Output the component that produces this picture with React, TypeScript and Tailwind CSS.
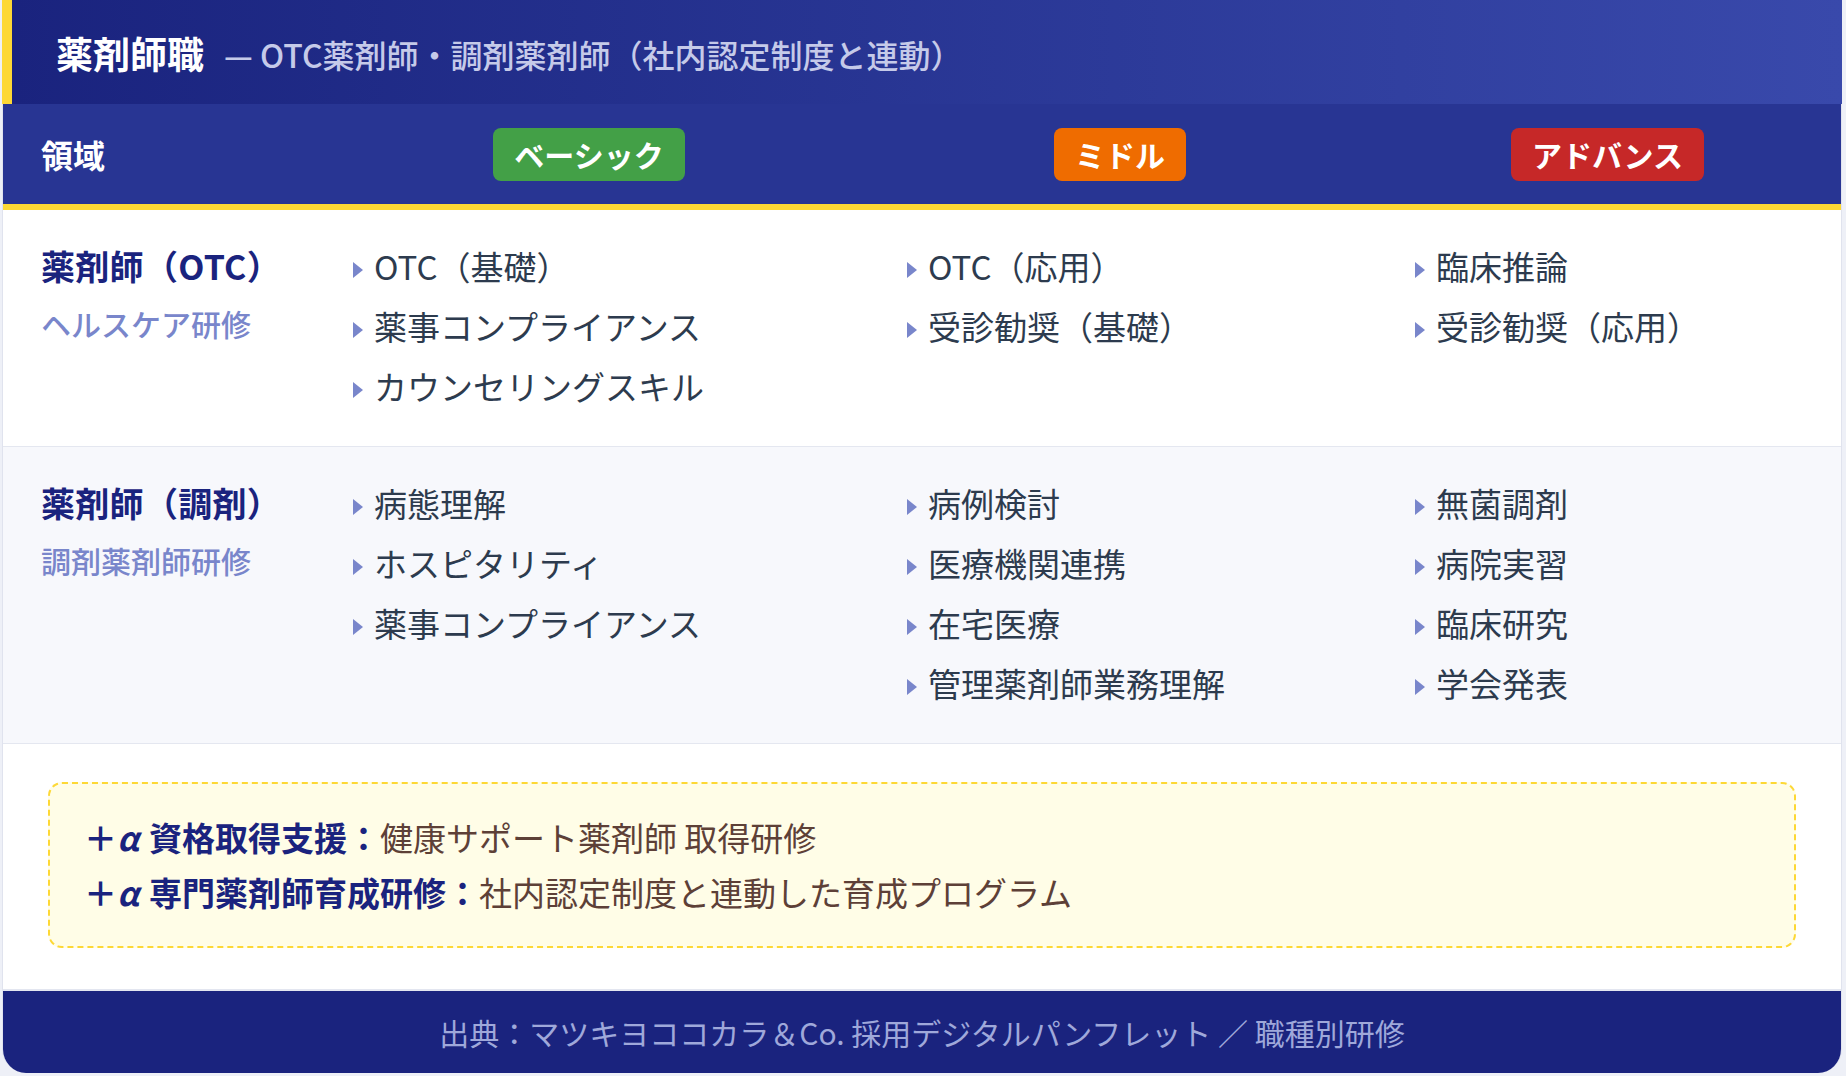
import React from "react";

const COLS = "grid grid-cols-[309px_554px_508px_467px]";

function Bullet() {
  return (
    <svg width="10" height="16" viewBox="0 0 10 16" className="shrink-0 mt-[8px]">
      <path d="M0 0 L10 8 L0 16 Z" fill="#7986cb" />
    </svg>
  );
}

function Item({ text }: { text: string }) {
  return (
    <div className="flex items-center gap-[11px] h-[60px] text-[33px] text-[#2d3b4e] leading-[60px] whitespace-nowrap">
      <Bullet />
      <span>{text}</span>
    </div>
  );
}

function Cell({ items }: { items: string[] }) {
  return (
    <div className="pl-[41px] flex flex-col">
      {items.map((t, i) => (
        <Item key={i} text={t} />
      ))}
    </div>
  );
}

function Row({
  label,
  sub,
  cols,
  bg,
}: {
  label: string;
  sub: string;
  cols: string[][];
  bg: string;
}) {
  return (
    <div className={`${COLS} pt-[26px] pb-[30px] border-b border-[#e4e7f0] ${bg}`}>
      <div className="pl-[38px] flex flex-col">
        <div className="text-[34px] font-bold text-[#1a237e] leading-[60px] whitespace-nowrap tracking-[0.3px]">{label}</div>
        <div className="text-[30px] font-medium text-[#7986cb] leading-[54px] whitespace-nowrap">{sub}</div>
      </div>
      {cols.map((c, i) => (
        <Cell key={i} items={c} />
      ))}
    </div>
  );
}

function PlusLine({ head, body }: { head: string; body: string }) {
  return (
    <div>
      <span className="font-bold text-[#1a237e]">
        ＋<span className="italic mr-[10px]">α</span>
        {head}
      </span>
      <span className="text-[#5d4037]">{body}</span>
    </div>
  );
}

export default function App() {
  return (
    <div className="min-h-screen bg-[#eef0f7] font-['Noto_Sans_CJK_JP','Noto_Sans',sans-serif]">
      <div className="w-[1840px] ml-[2px]">
        {/* Header */}
        <div className="h-[104px] border-l-[10px] border-[#fdd835] bg-gradient-to-r from-[#1a237e] to-[#3949ab] flex items-center pl-[44px] pt-[4px] gap-[20px]">
          <span className="text-[37px] font-bold text-white whitespace-nowrap">薬剤師職</span>
          <span className="text-[32px] font-medium text-[#c5cae9] whitespace-nowrap">— OTC薬剤師・調剤薬剤師（社内認定制度と連動）</span>
        </div>

        <div className="border-x border-[#e0e3ee] rounded-b-[24px] overflow-hidden bg-white">
          {/* Column header */}
          <div className={`${COLS} h-[106px] bg-[#283593] border-b-[6px] border-[#fdd835] items-center`}>
            <div className="pl-[38px] text-[32px] font-bold text-white">領域</div>
            <div className="flex justify-center">
              <span className="h-[53px] px-[21px] rounded-[8px] bg-[#43a047] text-white font-bold text-[30px] flex items-center">ベーシック</span>
            </div>
            <div className="flex justify-center">
              <span className="h-[53px] px-[21px] rounded-[8px] bg-[#ef6c00] text-white font-bold text-[30px] flex items-center">ミドル</span>
            </div>
            <div className="flex justify-center">
              <span className="h-[53px] px-[21px] rounded-[8px] bg-[#c62828] text-white font-bold text-[30px] flex items-center">アドバンス</span>
            </div>
          </div>

          <Row
            label="薬剤師（OTC）"
            sub="ヘルスケア研修"
            bg="bg-white"
            cols={[
              ["OTC（基礎）", "薬事コンプライアンス", "カウンセリングスキル"],
              ["OTC（応用）", "受診勧奨（基礎）"],
              ["臨床推論", "受診勧奨（応用）"],
            ]}
          />
          <Row
            label="薬剤師（調剤）"
            sub="調剤薬剤師研修"
            bg="bg-[#f7f8fc]"
            cols={[
              ["病態理解", "ホスピタリティ", "薬事コンプライアンス"],
              ["病例検討", "医療機関連携", "在宅医療", "管理薬剤師業務理解"],
              ["無菌調剤", "病院実習", "臨床研究", "学会発表"],
            ]}
          />

          {/* Plus alpha box */}
          <div className="px-[45px] pt-[38px] pb-[41px] bg-white">
            <div className="border-2 border-dashed border-[#fdd835] bg-[#fffde7] rounded-[14px] px-[34px] py-[26px] text-[33px] leading-[55px] whitespace-nowrap">
              <PlusLine head="資格取得支援：" body="健康サポート薬剤師 取得研修" />
              <PlusLine head="専門薬剤師育成研修：" body="社内認定制度と連動した育成プログラム" />
            </div>
          </div>

          {/* Footer */}
          <div className="h-[84px] border-t-2 border-[#e3e6f0] bg-[#1a237e] flex items-center justify-center text-[30px] text-[#9fa8da] whitespace-nowrap">
            出典：マツキヨココカラ＆Co. 採用デジタルパンフレット ／ 職種別研修
          </div>
        </div>
      </div>
    </div>
  );
}
